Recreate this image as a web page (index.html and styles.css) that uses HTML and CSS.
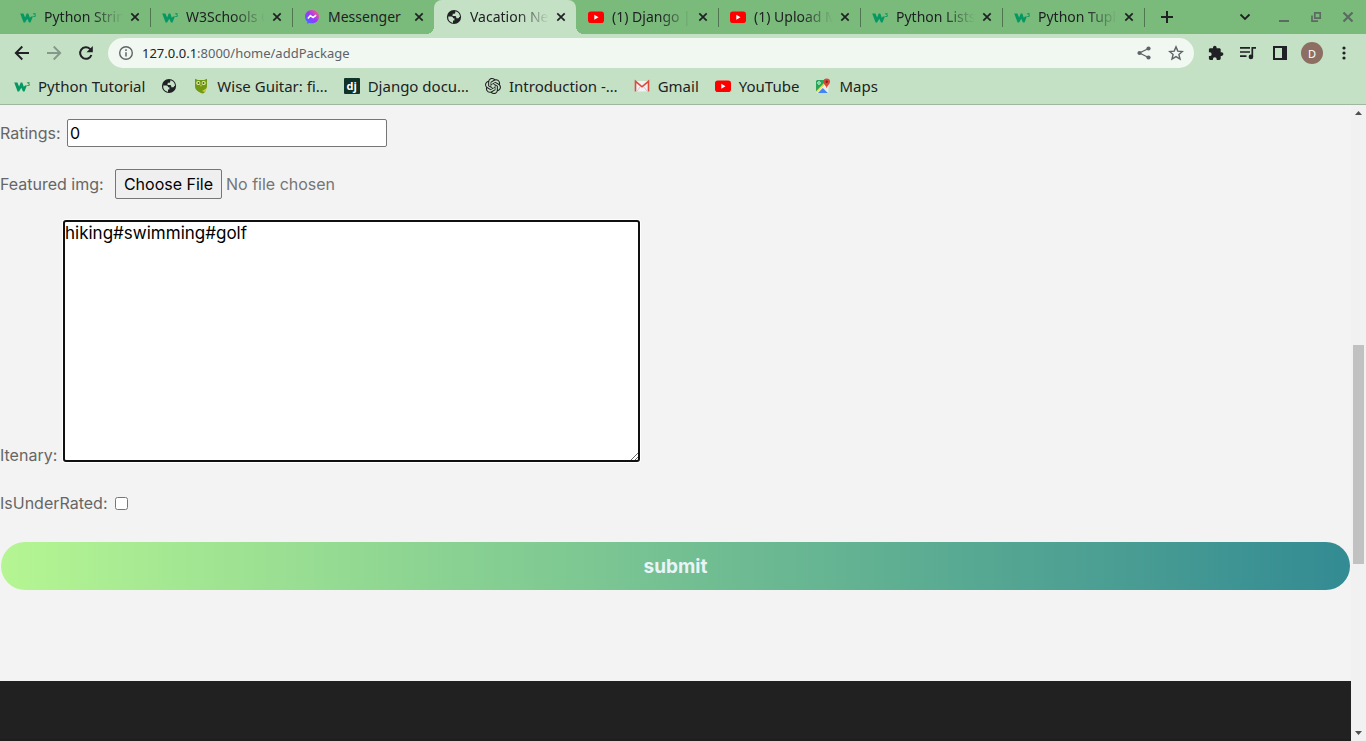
FILE: index.html
```html
<!DOCTYPE html>
<html lang="en">
<head>
<meta charset="utf-8">
<title>Vacation</title>
<link rel="stylesheet" href="styles.css">
</head>
<body>
<svg class="defs" aria-hidden="true">
  <defs>
    <linearGradient id="msg" x1="0" y1="1" x2="1" y2="0">
      <stop offset="0" stop-color="#2a7bff"/><stop offset=".5" stop-color="#a033ff"/><stop offset="1" stop-color="#ff6a6a"/>
    </linearGradient>
    <symbol id="w3" viewBox="0 0 16 16">
      <path d="M.2 4.400h3.200l1.700 4L6.700 4.400h1.600l1.500 4.400 1.200-1.300h1.900L10.500 13.400H9L7.300 9.700 5.100 13.400H3.600z" fill="#059862"/>
      <text x="12.400" y="7.600" class="w3-three">3</text>
    </symbol>
    <symbol id="globe" viewBox="0 0 16 16">
      <circle cx="8" cy="8" r="7.100" fill="#202124"/>
      <path d="M2.200 7.600h3.300c1.200 0 1.500.8 1.500 1.600h1.400v2.200H7v2.500A6 6 0 0 1 2.200 7.600zM9.300 2.200v1.200c0 .8-.6 1.300-1.400 1.300H6.700v1.500c0 .5-.3.800-.8.800h2.900c.9 0 1.500.6 1.500 1.500v.8h1.500c.8 0 1.300-.5 1.300-1.300h.9A6 6 0 0 0 9.300 2.200z" fill="#c5e1c5"/>
    </symbol>
    <symbol id="yt" viewBox="0 0 16 16">
      <rect x="0" y="2.500" width="16" height="11.500" rx="2.800" fill="#f00"/><path d="M6.300 5.800v4.900l4.200-2.400z" fill="#fff"/>
    </symbol>
    <symbol id="x" viewBox="0 0 10 10"><path d="M1.300 1.300l7.400 7.400M8.700 1.300L1.300 8.700" fill="none" stroke="currentColor" stroke-width="1.700"/></symbol>
  </defs>
</svg>

<header class="browser">
  <div class="tabstrip">
    <nav class="tabs" aria-label="Tabs">
      <div class="tab"><svg class="ico"><use href="#w3"/></svg><span class="tab-title">Python Strings</span><button class="close" aria-label="Close tab"><svg><use href="#x"/></svg></button></div>
      <div class="tab"><svg class="ico"><use href="#w3"/></svg><span class="tab-title">W3Schools O</span><button class="close" aria-label="Close tab"><svg><use href="#x"/></svg></button></div>
      <div class="tab plain"><svg class="ico" viewBox="0 0 16 16"><path d="M8 1C4 1 1 3.900 1 7.700c0 2 .8 3.700 2.200 4.900l.1 2.200 2-.9c.900.3 1.800.4 2.700.4 4 0 7-2.900 7-6.600S12 1 8 1z" fill="url(#msg)"/><path d="M3.900 9.600l2.500-3 2.700 2 3-2.400" fill="none" stroke="#fff" stroke-width="1.600"/></svg><span class="tab-title full">Messenger</span><button class="close" aria-label="Close tab"><svg><use href="#x"/></svg></button></div>
      <div class="tab active"><svg class="ico"><use href="#globe"/></svg><span class="tab-title">Vacation Nepal</span><button class="close" aria-label="Close tab"><svg><use href="#x"/></svg></button></div>
      <div class="tab"><svg class="ico"><use href="#yt"/></svg><span class="tab-title">(1) Django | M</span><button class="close" aria-label="Close tab"><svg><use href="#x"/></svg></button></div>
      <div class="tab"><svg class="ico"><use href="#yt"/></svg><span class="tab-title">(1) Upload Mul</span><button class="close" aria-label="Close tab"><svg><use href="#x"/></svg></button></div>
      <div class="tab"><svg class="ico"><use href="#w3"/></svg><span class="tab-title">Python Lists</span><button class="close" aria-label="Close tab"><svg><use href="#x"/></svg></button></div>
      <div class="tab"><svg class="ico"><use href="#w3"/></svg><span class="tab-title">Python Tuple</span><button class="close" aria-label="Close tab"><svg><use href="#x"/></svg></button></div>
    </nav>
    <button class="icon-btn new-tab" aria-label="New tab"><svg viewBox="0 0 16 16"><path d="M8 2v12M2 8h12" stroke="#202124" stroke-width="2"/></svg></button>
    <div class="window-controls">
      <button class="icon-btn" aria-label="Search tabs"><svg viewBox="0 0 16 16"><path d="M3.500 5.500L8 10l4.500-4.500" fill="none" stroke="#202124" stroke-width="1.800"/></svg></button>
      <button class="icon-btn" aria-label="Minimize"><svg viewBox="0 0 16 16"><path d="M3 12h10" stroke="#5b6b60" stroke-width="2"/></svg></button>
      <button class="icon-btn" aria-label="Restore"><svg viewBox="0 0 16 16"><path d="M6.800 3.800h5.400v5.400H6.800zM4 6.500v5.700h6" fill="none" stroke="#5b6b60" stroke-width="1.700"/></svg></button>
      <button class="icon-btn" aria-label="Close window"><svg viewBox="0 0 16 16"><path d="M3.500 3.500l9 9M12.500 3.500l-9 9" stroke="#5b6b60" stroke-width="2.200"/></svg></button>
    </div>
  </div>

  <div class="toolbar">
    <button class="icon-btn" aria-label="Back"><svg viewBox="0 0 16 16"><path d="M15 8H2M8.300 1.500L1.800 8l6.500 6.500" fill="none" stroke="#202124" stroke-width="1.900"/></svg></button>
    <button class="icon-btn" aria-label="Forward"><svg viewBox="0 0 16 16"><path d="M1 8h13M7.700 1.500L14.200 8l-6.500 6.500" fill="none" stroke="#85998a" stroke-width="1.900"/></svg></button>
    <button class="icon-btn" aria-label="Reload"><svg viewBox="0 0 16 16"><path d="M13.400 10A5.800 5.800 0 1 1 12 3.900l1 1" fill="none" stroke="#202124" stroke-width="2"/><path d="M14.800.9v6.300H8.500z" fill="#202124"/></svg></button>
    <div class="omnibox">
      <svg class="ico" viewBox="0 0 16 16"><circle cx="8" cy="8" r="6.300" fill="none" stroke="#5f6368" stroke-width="1.400"/><path d="M8 7.200v4.200M8 4.300v1.600" stroke="#5f6368" stroke-width="1.500"/></svg>
      <span class="url"><b>127.0.0.1</b>:8000/home/addPackage</span>
      <button class="icon-btn" aria-label="Share"><svg viewBox="0 0 16 16"><path d="M12.500 3.500L3.500 8l9 4.500" fill="none" stroke="#5f6368" stroke-width="1.300"/><g fill="#5f6368"><circle cx="12.500" cy="3.500" r="2.100"/><circle cx="3.500" cy="8" r="2.100"/><circle cx="12.500" cy="12.500" r="2.100"/></g></svg></button>
      <button class="icon-btn" aria-label="Bookmark"><svg viewBox="0 0 16 16"><path d="M8 1.900l1.800 4.200 4.600.4-3.500 3 1.100 4.500-4-2.400L4 14l1.100-4.500-3.500-3 4.600-.4z" fill="none" stroke="#5f6368" stroke-width="1.400"/></svg></button>
    </div>
    <div class="extensions">
      <button class="icon-btn" aria-label="Extensions"><svg viewBox="0 0 16 16"><path d="M13.600 7.300h-.9V4.600c0-.8-.6-1.400-1.400-1.400H8.600v-.7a1.800 1.800 0 0 0-3.600 0v.7H2.300C1.500 3.200.9 3.800.9 4.600v2.600h.8a1.900 1.900 0 0 1 0 3.900H.9v2.500c0 .8.6 1.400 1.400 1.400h2.600v-.8a1.900 1.900 0 0 1 3.800 0v.8h2.600c.8 0 1.400-.6 1.400-1.400v-2.700h.9a1.800 1.800 0 0 0 0-3.600z" fill="#202124"/></svg></button>
      <button class="icon-btn" aria-label="Media"><svg viewBox="0 0 16 16"><path d="M0 2.900h10M0 7h10M0 11.200h6.500M12.300 12V2.900H16" fill="none" stroke="#202124" stroke-width="1.700"/><circle cx="10.900" cy="11.900" r="2.300" fill="#202124"/></svg></button>
      <button class="icon-btn" aria-label="Side panel"><svg viewBox="0 0 16 16"><path d="M2 2h12v12H2z" fill="none" stroke="#202124" stroke-width="2"/><path d="M10 2h4v12h-4z" fill="#202124"/></svg></button>
      <button class="avatar">D</button>
      <button class="icon-btn" aria-label="Menu"><svg viewBox="0 0 16 16"><g fill="#202124"><circle cx="8" cy="3" r="1.600"/><circle cx="8" cy="8" r="1.600"/><circle cx="8" cy="13" r="1.600"/></g></svg></button>
    </div>
  </div>

  <nav class="bookmarks" aria-label="Bookmarks">
    <a href="#" class="bookmark"><svg class="ico"><use href="#w3"/></svg><span>Python Tutorial</span></a>
    <a href="#" class="bookmark" aria-label="Site"><svg class="ico"><use href="#globe"/></svg></a>
    <a href="#" class="bookmark"><svg class="ico" viewBox="0 0 16 16"><path d="M2 .8l3 1.100h6L14 .8v7.200c0 1.500-.7 2.600-1.500 3.500.3 1.800-.5 3-2.500 4-3-.7-8-3-8-7z" fill="#6f9a12"/><circle cx="5.300" cy="5" r="2.100" fill="#e7efb9"/><circle cx="10.700" cy="5" r="2.100" fill="#e7efb9"/><circle cx="5.500" cy="5" r="1" fill="#41600a"/><circle cx="10.500" cy="5" r="1" fill="#41600a"/><path d="M7 6.800h2L8 9zM9 13l5-3-2 4z" fill="#d8c83e"/></svg><span>Wise Guitar: fi…</span></a>
    <a href="#" class="bookmark"><svg class="ico" viewBox="0 0 16 16"><rect width="16" height="16" rx="1" fill="#113228"/><text x="2.500" y="11.500" class="dj">dj</text></svg><span>Django docu…</span></a>
    <a href="#" class="bookmark"><svg class="ico" viewBox="0 0 24 24"><path fill="#202124" d="M22.2819 9.8211a5.9847 5.9847 0 0 0-.5157-4.9108 6.0462 6.0462 0 0 0-6.5098-2.9A6.0651 6.0651 0 0 0 4.9807 4.1818a5.9847 5.9847 0 0 0-3.9977 2.9 6.0462 6.0462 0 0 0 .7427 7.0966 5.98 5.98 0 0 0 .511 4.9107 6.051 6.051 0 0 0 6.5146 2.9001A5.9847 5.9847 0 0 0 13.2599 24a6.0557 6.0557 0 0 0 5.7718-4.2058 5.9894 5.9894 0 0 0 3.9977-2.9001 6.0557 6.0557 0 0 0-.7475-7.0729zm-9.022 12.6081a4.4755 4.4755 0 0 1-2.8764-1.0408l.1419-.0804 4.7783-2.7582a.7948.7948 0 0 0 .3927-.6813v-6.7369l2.02 1.1686a.071.071 0 0 1 .038.052v5.5826a4.504 4.504 0 0 1-4.4945 4.4944zm-9.6607-4.1254a4.4708 4.4708 0 0 1-.5346-3.0137l.142.0852 4.783 2.7582a.7712.7712 0 0 0 .7806 0l5.8428-3.3685v2.3324a.0804.0804 0 0 1-.0332.0615L9.74 19.9502a4.4992 4.4992 0 0 1-6.1408-1.6464zM2.3408 7.8956a4.485 4.485 0 0 1 2.3655-1.9728V11.6a.7664.7664 0 0 0 .3879.6765l5.8144 3.3543-2.0201 1.1685a.0757.0757 0 0 1-.071 0l-4.8303-2.7865A4.504 4.504 0 0 1 2.3408 7.872zm16.5963 3.8558L13.1038 8.364 15.1192 7.2a.0757.0757 0 0 1 .071 0l4.8303 2.7913a4.4944 4.4944 0 0 1-.6765 8.1042v-5.6772a.79.79 0 0 0-.407-.667zm2.0107-3.0231l-.142-.0852-4.7735-2.7818a.7759.7759 0 0 0-.7854 0L9.409 9.2297V6.8974a.0662.0662 0 0 1 .0284-.0615l4.8303-2.7866a4.4992 4.4992 0 0 1 6.6802 4.66zM8.3065 12.863l-2.02-1.1638a.0804.0804 0 0 1-.038-.0567V6.0742a4.4992 4.4992 0 0 1 7.3757-3.4537l-.142.0805L8.704 5.459a.7948.7948 0 0 0-.3927.6813zm1.0976-2.3654l2.602-1.4998 2.6069 1.4998v2.9994l-2.5974 1.4997-2.6067-1.4997Z"/></svg><span>Introduction -…</span></a>
    <a href="#" class="bookmark"><svg class="ico" viewBox="0 0 16 16"><path d="M1 3h14v10.500H1z" fill="#f1f1f1"/><path d="M3 13.300l3.500-5M13 13.300l-3.500-5" stroke="#ccc"/><path d="M1.500 13.500V3.300L8 8.800l6.500-5.500v10.200" fill="none" stroke="#dc4b3e" stroke-width="1.600"/></svg><span>Gmail</span></a>
    <a href="#" class="bookmark"><svg class="ico"><use href="#yt"/></svg><span>YouTube</span></a>
    <a href="#" class="bookmark"><svg class="ico" viewBox="0 0 16 16"><rect x="1" y="2" width="12.500" height="13" rx="1.500" fill="#e8ebe8"/><path d="M2 2h8v4L1 14V3z" fill="#26a65b"/><path d="M3 15l4.800-5 5 5z" fill="#4285f4"/><path d="M1.300 14L11 4" stroke="#fdd835" stroke-width="1.500"/><circle cx="4" cy="5" r="1.300" fill="none" stroke="#fff" stroke-width=".8"/><path d="M11.700.4a3.300 3.300 0 0 1 3.300 3.300c0 2.500-2.500 3.300-3.300 6.600-.8-3.300-3.300-4.100-3.300-6.600A3.300 3.300 0 0 1 11.700.4z" fill="#dc4538"/><circle cx="11.700" cy="3.700" r="1.200" fill="#7c231c"/></svg><span>Maps</span></a>
  </nav>
</header>

<div class="viewport">
  <main class="page">
    <form class="package-form">
      <div class="row"><label for="ratings">Ratings:</label><input id="ratings" class="text-input" type="text" value="0"></div>
      <div class="row"><label for="img" class="wide">Featured img:</label><input id="img" class="file-input" type="file"></div>
      <div class="row bottom"><label for="itenary" class="narrow">Itenary:</label><textarea id="itenary" class="area" spellcheck="false">hiking#swimming#golf</textarea></div>
      <div class="row check"><label for="under" class="wide">IsUnderRated:</label><input id="under" class="checkbox" type="checkbox"></div>
      <button class="submit" type="button">submit</button>
    </form>
    <footer class="footer"></footer>
  </main>
  <div class="scrollbar" aria-hidden="true">
    <svg class="arrow" viewBox="0 0 15 15"><path d="M4 10h7L7.500 6z" fill="#505050"/></svg>
    <div class="track"><div class="thumb"></div></div>
    <svg class="arrow" viewBox="0 0 15 15"><path d="M4 5h7L7.500 9z" fill="#505050"/></svg>
  </div>
</div>
</body>
</html>
```

FILE: styles.css
```css
* { box-sizing: border-box; }

body {
  margin: 0;
  height: 100vh;
  display: flex;
  flex-direction: column;
  overflow: hidden;
  background: #f3f3f3;
  font-family: Inter, sans-serif;
}

button { border: 0; padding: 0; background: none; font: inherit; }

.defs { position: absolute; width: 0; height: 0; }
.ico { width: 16px; height: 16px; flex: none; }
.w3-three { font: bold 6px "Open Sans", sans-serif; fill: #059862; }
.dj { font: bold 11px "Open Sans", sans-serif; fill: #fff; }

/* Browser chrome */
.browser {
  flex: none;
  background: #c5e1c5;
  border-bottom: 1px solid #9fb79f;
  color: #202124;
  font-family: "Noto Sans", sans-serif;
  font-size: 14px;
}

.tabstrip { display: flex; height: 34px; padding-left: 8px; background: #7abb7c; }
.tabs { display: flex; }
.tab {
  position: relative;
  display: flex;
  align-items: center;
  width: 142px;
  height: 34px;
  padding: 0 7px 0 12px;
}
.tab::after {
  content: "";
  position: absolute;
  right: -1px;
  top: 8px;
  width: 1px;
  height: 19px;
  background: #4f7551;
}
.tab.plain::after { display: none; }
.tab.active { background: #c5e1c5; border-radius: 8px 8px 0 0; }
.tab.active::before,
.tab.active::after {
  content: "";
  position: absolute;
  top: auto;
  bottom: 0;
  width: 8px;
  height: 8px;
}
.tab.active::before { left: -8px; background: radial-gradient(circle at 0 0, #7abb7c 8px, #c5e1c5 8px); }
.tab.active::after { right: -8px; background: radial-gradient(circle at 100% 0, #7abb7c 8px, #c5e1c5 8px); }
.tab-title {
  flex: 1;
  margin-left: 8px;
  overflow: hidden;
  white-space: nowrap;
  line-height: 20px;
  -webkit-mask-image: linear-gradient(90deg, #000 60%, transparent);
  mask-image: linear-gradient(90deg, #000 60%, transparent);
}
.tab-title.full { -webkit-mask-image: none; mask-image: none; }
.close { display: flex; align-items: center; justify-content: center; width: 16px; height: 16px; margin-left: 4px; color: #202124; }
.close svg { width: 10px; height: 10px; }

.icon-btn { display: flex; align-items: center; justify-content: center; width: 16px; height: 16px; flex: none; }
.icon-btn svg { width: 16px; height: 16px; }
.new-tab { align-self: center; margin-left: 15px; }
.window-controls { display: flex; align-items: center; gap: 16px; margin-left: auto; padding-right: 10px; }
.window-controls .icon-btn:first-child { margin-right: 7px; }

.toolbar { display: flex; align-items: center; gap: 16px; height: 38px; padding: 0 14px; }
.omnibox {
  flex: 1;
  display: flex;
  align-items: center;
  gap: 16px;
  height: 30px;
  margin: 0 -2px;
  padding: 0 10px;
  border-radius: 15px;
  background: #f1f8f1;
}
.url { flex: 1; margin-left: -8px; color: #5f6368; font-size: 13px; }
.url b { font-weight: 400; color: #202124; }
.extensions { display: flex; align-items: center; gap: 16px; }
.extensions .avatar { margin: 0 -3px; }
.avatar { width: 22px; height: 22px; border-radius: 50%; background: #8d6e63; color: #fff; font-size: 11px; }

.bookmarks { display: flex; align-items: center; gap: 16px; height: 32px; padding: 0 14px 4px; font-size: 15px; }
.bookmark { display: flex; align-items: center; gap: 8px; color: #202124; text-decoration: none; white-space: nowrap; line-height: 20px; }

/* Page */
.viewport { flex: 1; display: flex; min-height: 0; }
.page { flex: 1; display: flex; flex-direction: column; min-width: 0; color: #666; font-size: 16px; }
.package-form { display: flex; flex-direction: column; gap: 22px; padding: 14px 1px 91px; }
.row { display: flex; align-items: center; gap: 4px; margin-left: -1px; line-height: 24px; }
.row label { min-width: 63px; }
.row .wide { min-width: 111px; }
.row .narrow { min-width: 60px; }
.text-input {
  width: 320px;
  height: 28px;
  padding: 0 2px 1px;
  border: 1px solid #767676;
  border-radius: 2px;
  background: #fff;
  color: #000;
  font: inherit;
}
.file-input { width: 320px; height: 30px; font: inherit; color: #757575; }
.file-input::file-selector-button {
  width: 107px;
  height: 30px;
  margin-right: 4px;
  padding: 0;
  border: 1px solid #767676;
  border-radius: 2px;
  background: #efefef;
  color: #000;
  font: inherit;
}
.bottom { align-items: flex-end; }
.bottom label { line-height: 12px; }
.area {
  width: 575px;
  height: 240px;
  padding: 0 1px;
  border: 0;
  outline: 2px solid #101010;
  outline-offset: -1px;
  border-radius: 2px;
  box-shadow: 0 0 0 2px #fff;
  background: #fff;
  color: #000;
  font: inherit;
  font-size: 17px;
  line-height: 24px;
}
.check { padding-top: 8px; padding-bottom: 5px; }
.checkbox { width: 13px; height: 13px; margin: 0; }
.submit {
  height: 48px;
  border-radius: 24px;
  background: linear-gradient(90deg, #b5f592, #338b93);
  color: #e8f4f8;
  font-size: 19px;
  font-weight: 700;
}
.footer { flex: 1; background: #212121; border-bottom: 2px solid #231c1f; }

.scrollbar { display: flex; flex-direction: column; width: 15px; background: #f1f1f1; }
.arrow { width: 15px; height: 15px; flex: none; }
.track { flex: 1; display: flex; flex-direction: column; padding: 0 2px; }
.track::before { content: ""; flex: 225; }
.track::after { content: ""; flex: 162; }
.thumb { flex: 219; background: #c1c1c1; }
```
